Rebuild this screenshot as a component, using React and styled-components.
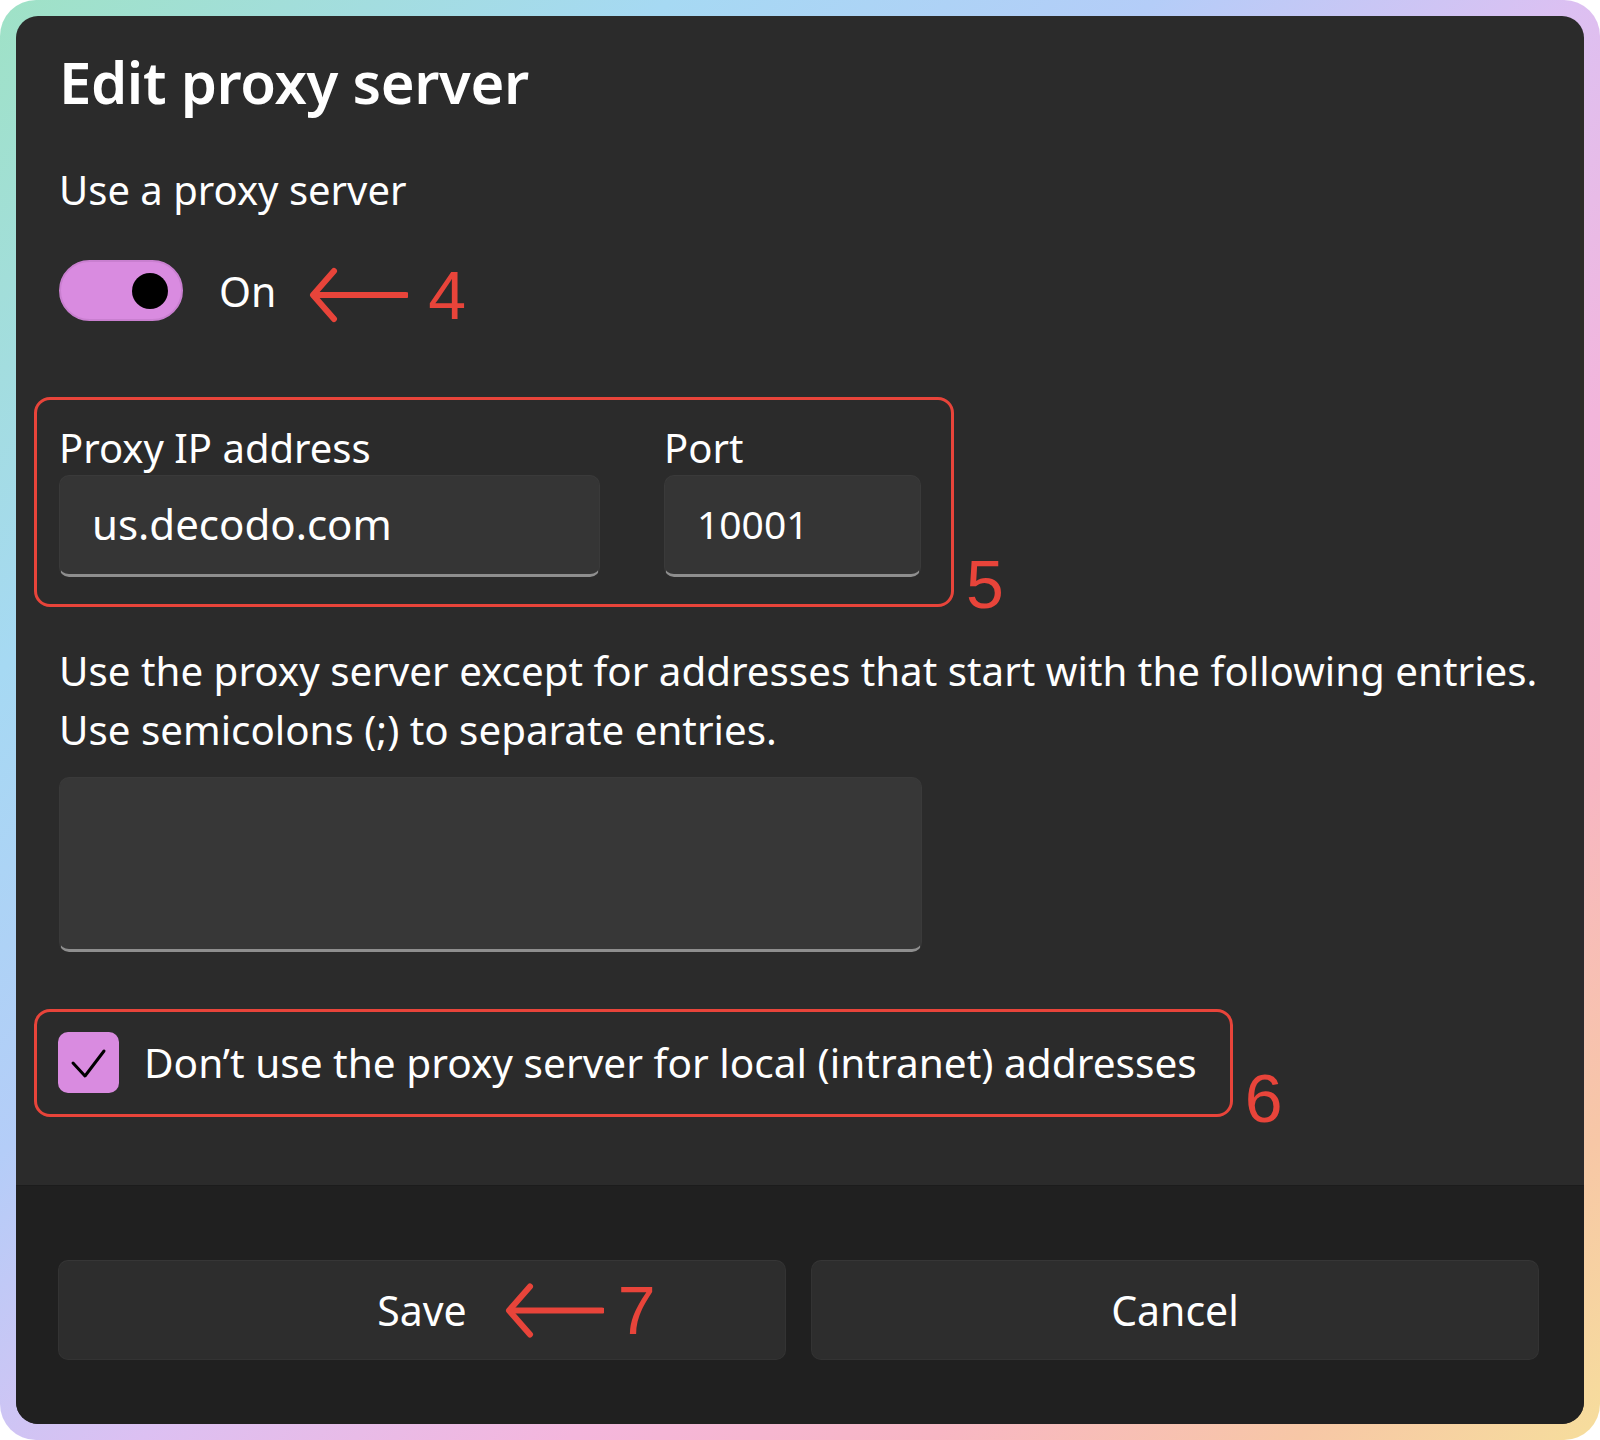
import React from "react";
import styled, { createGlobalStyle } from "styled-components";

const GlobalStyle = createGlobalStyle`
  html, body {
    margin: 0;
    padding: 0;
    background: #ffffff;
  }
  body {
    font-family: "Noto Sans", "Open Sans", sans-serif;
  }
`;

const Frame = styled.div`
  width: 1600px;
  height: 1440px;
  box-sizing: border-box;
  padding: 16px;
  border-radius: 36px;
  background: linear-gradient(
    135deg,
    #9fe2c6 0%,
    #a6d9f3 22%,
    #b4cdf8 38%,
    #dcc0f2 52%,
    #f4b6dc 66%,
    #f8b6c4 78%,
    #f7c7a6 90%,
    #f6de9c 100%
  );
`;

const Panel = styled.div`
  height: 100%;
  display: flex;
  flex-direction: column;
  border-radius: 22px;
  overflow: hidden;
  background: #2b2b2b;
  color: #ffffff;
`;

const Body = styled.div`
  flex: 1;
  padding: 32px 43px 0;
`;

const Title = styled.h1`
  margin: 0;
  font-size: 58px;
  line-height: 68px;
  font-weight: 600;
  letter-spacing: -0.4px;
`;

const Label = styled.div`
  font-size: 40px;
  line-height: 48px;
  margin-top: ${(p) => p.$top || 0}px;
`;

const ToggleRow = styled.div`
  display: flex;
  align-items: center;
  height: 61px;
  margin-top: 46px;
`;

const Toggle = styled.div`
  width: 124px;
  height: 61px;
  box-sizing: border-box;
  border-radius: 31px;
  background: #d98be0;
  border: 2px solid #c97fd0;
  display: flex;
  align-items: center;
  justify-content: flex-end;
  padding-right: 13px;
`;

const Knob = styled.span`
  width: 36px;
  height: 36px;
  border-radius: 50%;
  background: #000;
`;

const ToggleText = styled.span`
  font-size: 41px;
  margin-left: 36px;
`;

const Mark = styled.span`
  font-family: "Liberation Sans", Arial, sans-serif;
  font-size: 68px;
  line-height: 68px;
  color: #e8443a;
`;

const Arrow = ({ width = 100, height = 56 }) => (
  <svg width={width} height={height} viewBox="0 0 100 56" fill="none">
    <path d="M98 28 H6" stroke="#e8443a" strokeWidth="6" strokeLinecap="round" />
    <path
      d="M26 4 L5 28 L26 52"
      stroke="#e8443a"
      strokeWidth="6"
      strokeLinecap="round"
      strokeLinejoin="round"
    />
  </svg>
);

const Callout = styled.span`
  display: inline-flex;
  align-items: center;
  gap: 20px;
  margin-left: ${(p) => p.$left || 0}px;
  padding-top: 8px;
`;

const Highlight = styled.div`
  position: relative;
  width: fit-content;
  margin-left: -25px;
  margin-top: ${(p) => p.$top}px;
  padding: ${(p) => p.$pad};
  border: 3px solid #e8443a;
  border-radius: 16px;
`;

const CornerMark = styled(Mark)`
  position: absolute;
  left: calc(100% + 15px);
  top: ${(p) => p.$top}px;
`;

const Fields = styled.div`
  display: flex;
  gap: 64px;
`;

const Field = styled.div`
  display: flex;
  flex-direction: column;
  gap: 3px;
`;

const Input = styled.div`
  width: ${(p) => p.$w}px;
  height: ${(p) => p.$h}px;
  box-sizing: border-box;
  background: #353535;
  border: 1px solid #3a3a3a;
  border-bottom: 3px solid #8e8e8e;
  border-radius: 10px;
  padding-left: 32px;
  padding-bottom: 4px;
  display: flex;
  align-items: center;
  font-size: ${(p) => p.$fs || 42}px;
`;

const Description = styled.p`
  margin: 34px 0 0;
  font-size: 40.3px;
  line-height: 59px;
`;

const TextArea = styled(Input)`
  margin-top: 18px;
  background: #373737;
`;

const CheckRow = styled.div`
  display: flex;
  align-items: center;
  gap: 25px;
`;

const CheckBox = styled.span`
  width: 61px;
  height: 61px;
  border-radius: 10px;
  background: #d98be0;
  display: flex;
  align-items: center;
  justify-content: center;
`;

const CheckText = styled.span`
  font-size: 40.6px;
  line-height: 48px;
`;

const Footer = styled.div`
  height: 239px;
  box-sizing: border-box;
  background: #202020;
  border-top: 1px solid #1c1c1c;
  padding: 74px 45px 64px 42px;
  display: grid;
  grid-template-columns: 1fr 1fr;
  gap: 25px;
`;

const Button = styled.button`
  height: 100px;
  border-radius: 10px;
  background: #2d2d2d;
  border: 1px solid #333333;
  border-top-color: #363636;
  color: #ffffff;
  font-family: "Noto Sans", "Open Sans", sans-serif;
  font-size: 41px;
  display: flex;
  align-items: center;
  justify-content: center;
`;

const ButtonLabel = styled.span`
  position: relative;
`;

const ButtonCallout = styled.span`
  position: absolute;
  left: calc(100% + 37px);
  top: 50%;
  transform: translateY(-50%);
  display: flex;
  align-items: center;
  gap: 14px;
`;

export default function App() {
  return (
    <>
      <GlobalStyle />
      <Frame>
        <Panel>
          <Body>
            <Title>Edit proxy server</Title>
            <Label $top={50}>Use a proxy server</Label>
            <ToggleRow>
              <Toggle>
                <Knob />
              </Toggle>
              <ToggleText>On</ToggleText>
              <Callout $left={32}>
                <Arrow />
                <Mark>4</Mark>
              </Callout>
            </ToggleRow>

            <Highlight $top={76} $pad="24px 30px 27px 22px">
              <Fields>
                <Field>
                  <Label>Proxy IP address</Label>
                  <Input $w={541} $h={102}>us.decodo.com</Input>
                </Field>
                <Field>
                  <Label>Port</Label>
                  <Input $w={257} $h={102} $fs={39}>
                    10001
                  </Input>
                </Field>
              </Fields>
              <CornerMark $top={150}>5</CornerMark>
            </Highlight>

            <Description>
              Use the proxy server except for addresses that start with the
              following entries.
              <br />
              Use semicolons (;) to separate entries.
            </Description>
            <TextArea $w={863} $h={175} />

            <Highlight $top={57} $pad="20px 33px 21px 21px">
              <CheckRow>
                <CheckBox>
                  <svg width="61" height="61" viewBox="0 0 61 61" fill="none">
                    <path
                      d="M15 31 L27 44 L46 19"
                      stroke="#000"
                      strokeWidth="3"
                      strokeLinecap="round"
                      strokeLinejoin="round"
                    />
                  </svg>
                </CheckBox>
                <CheckText>
                  Don’t use the proxy server for local (intranet) addresses
                </CheckText>
              </CheckRow>
              <CornerMark $top={52}>6</CornerMark>
            </Highlight>
          </Body>

          <Footer>
            <Button>
              <ButtonLabel>
                Save
                <ButtonCallout>
                  <Arrow width={100} height={59} />
                  <Mark>7</Mark>
                </ButtonCallout>
              </ButtonLabel>
            </Button>
            <Button>Cancel</Button>
          </Footer>
        </Panel>
      </Frame>
    </>
  );
}
